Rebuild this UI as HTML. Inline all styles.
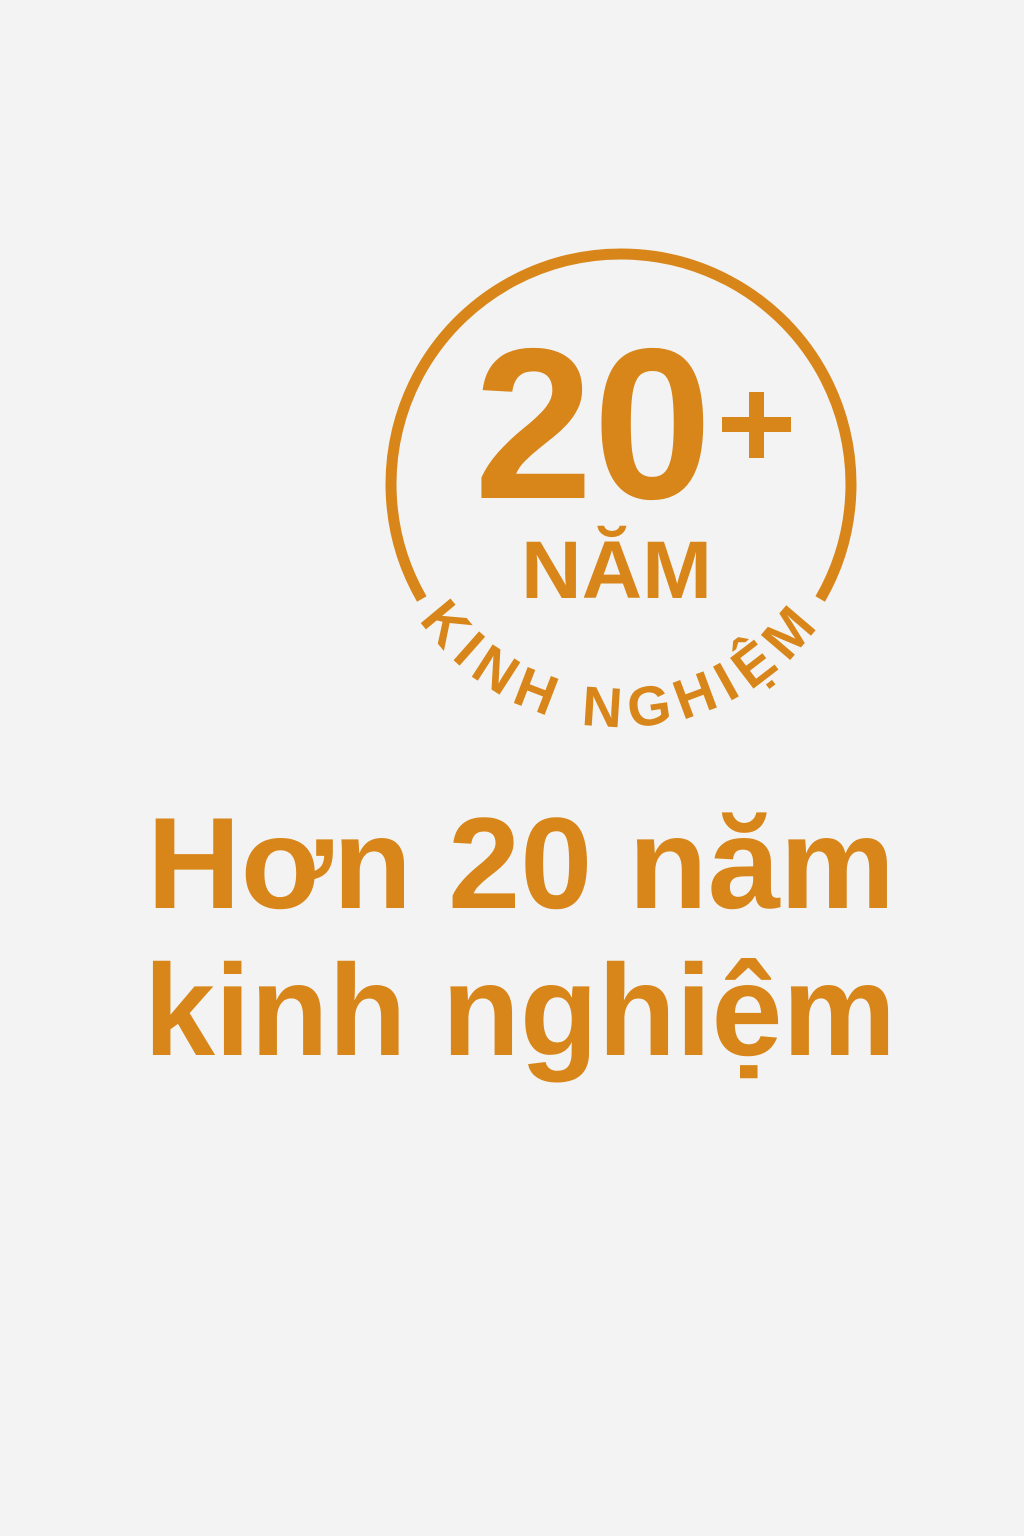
<!DOCTYPE html>
<html><head><meta charset="utf-8"><style>
html,body{margin:0;padding:0;background:#f3f3f3;}
body{width:1024px;height:1536px;position:relative;overflow:hidden;font-family:"Liberation Sans",sans-serif;}
svg{position:absolute;left:0;top:0;}
</style></head><body>
<svg width="1024" height="1536" viewBox="0 0 1024 1536">
<g fill="#d8861a">
<path d="M421.8 599 A230 230 0 1 1 820.2 599" fill="none" stroke="#d8861a" stroke-width="11"/>
<text x="474" y="498" font-family="Liberation Sans, sans-serif" font-weight="bold" font-size="215" textLength="238" lengthAdjust="spacingAndGlyphs">20</text>
<rect x="722" y="417" width="69" height="15"/>
<rect x="749" y="392" width="15" height="66"/>
<text x="521" y="598" font-family="Liberation Sans, sans-serif" font-weight="bold" font-size="82" textLength="191" lengthAdjust="spacingAndGlyphs">NĂM</text>
<path id="arc" d="M378 484 A243 243 0 0 0 864 484" fill="none"/>
<text font-family="Liberation Sans, sans-serif" font-weight="bold" font-size="56" letter-spacing="9" text-anchor="middle"><textPath href="#arc" startOffset="50%">KINH NGHIỆM</textPath></text>
<text x="147" y="908" font-family="Liberation Sans, sans-serif" font-weight="bold" font-size="130" textLength="748" lengthAdjust="spacingAndGlyphs">Hơn 20 năm</text>
<text x="144" y="1055" font-family="Liberation Sans, sans-serif" font-weight="bold" font-size="130" textLength="752" lengthAdjust="spacingAndGlyphs">kinh nghiệm</text>
</g>
</svg>
</body></html>
